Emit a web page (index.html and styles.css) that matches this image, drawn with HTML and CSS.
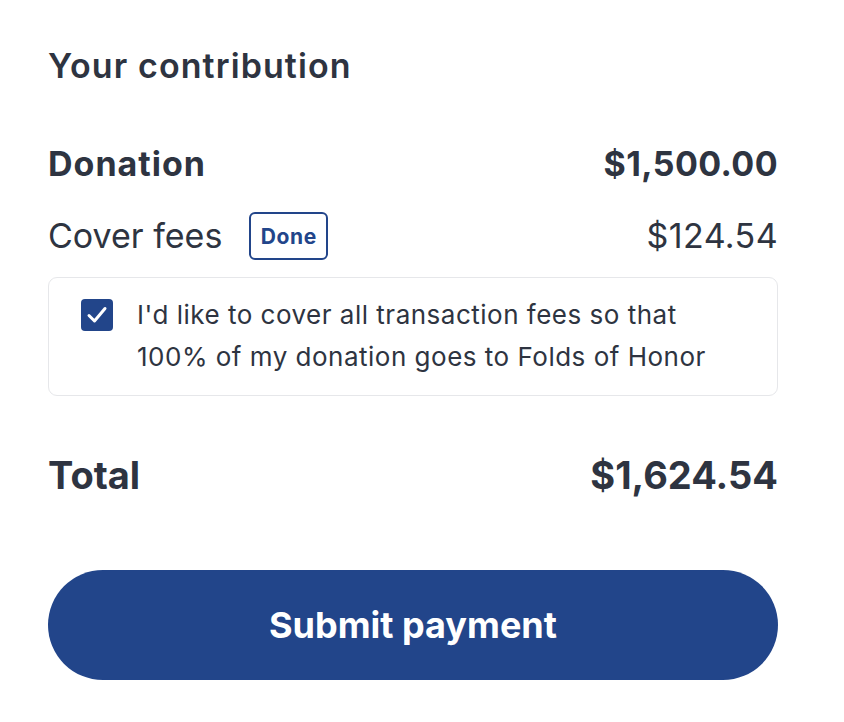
FILE: index.html
```html
<!DOCTYPE html>
<html>
<head>
<meta charset="utf-8">
<link rel="stylesheet" href="styles.css">
</head>
<body>
<main class="summary">
  <h2 class="title">Your contribution</h2>
  <div class="row row-donation">
    <span class="label strong">Donation</span>
    <span class="amount strong">$1,500.00</span>
  </div>
  <div class="row row-fees">
    <span class="label-group">
      <span class="label">Cover fees</span>
      <button class="done">Done</button>
    </span>
    <span class="amount">$124.54</span>
  </div>
  <label class="fee-box">
    <span class="check">
      <svg viewBox="0 0 32 32" width="32" height="32"><path d="M8 16.5 L13.5 22 L24 9.5" fill="none" stroke="#fff" stroke-width="3" stroke-linecap="round" stroke-linejoin="round"/></svg>
    </span>
    <span class="fee-text">I'd like to cover all transaction fees so that 100% of my donation goes to Folds of Honor</span>
  </label>
  <div class="row row-total">
    <span class="label total strong">Total</span>
    <span class="amount total strong">$1,624.54</span>
  </div>
  <button class="submit">Submit payment</button>
</main>
</body>
</html>
```
FILE: styles.css
```css
* { box-sizing: border-box; }
html, body { margin: 0; padding: 0; background: #fff; }
body {
  font-family: Inter, "Noto Sans", sans-serif;
  color: #2e3441;
}
.summary {
  width: 730px;
  margin-left: 48px;
  padding-top: 44px;
  display: flex;
  flex-direction: column;
}
.title {
  margin: 0;
  font-size: 34px;
  font-weight: 600;
  line-height: 44px;
  letter-spacing: 1.1px;
}
.row {
  display: flex;
  justify-content: space-between;
  align-items: center;
}
.row-donation { margin-top: 54px; height: 44px; }
.row-fees { margin-top: 26px; height: 48px; }
.row-total { margin-top: 54px; height: 50px; }
.label, .amount { font-size: 34px; line-height: 44px; letter-spacing: 0.4px; }
.strong { font-weight: 700; }
.row-donation .label { letter-spacing: 1px; }
.label.total, .amount.total { font-size: 38px; line-height: 50px; letter-spacing: 0; }
.label-group { display: flex; align-items: center; gap: 27px; }
.row-fees .label { letter-spacing: 0; }
.done {
  font-family: inherit;
  background: #fff;
  border: 2px solid #22458a;
  color: #22458a;
  border-radius: 6px;
  font-size: 21px;
  font-weight: 700;
  letter-spacing: 0.6px;
  height: 48px;
  width: 79px;
  padding: 0;
}
.fee-box {
  margin-top: 17px;
  border: 1.5px solid #e6e7ea;
  border-radius: 9px;
  height: 119px;
  display: flex;
  align-items: flex-start;
  padding: 21px 44px 0 32px;
  gap: 24px;
}
.check {
  flex: none;
  width: 32px;
  height: 32px;
  background: #22458a;
  border-radius: 4px;
  display: flex;
}
.fee-text {
  font-size: 26px;
  line-height: 42px;
  letter-spacing: 0.5px;
  margin-top: -5px;
}
.submit {
  margin-top: 70px;
  height: 110px;
  border: none;
  border-radius: 55px;
  background: #22458a;
  color: #fff;
  font-family: inherit;
  font-size: 36px;
  font-weight: 700;
}
```
